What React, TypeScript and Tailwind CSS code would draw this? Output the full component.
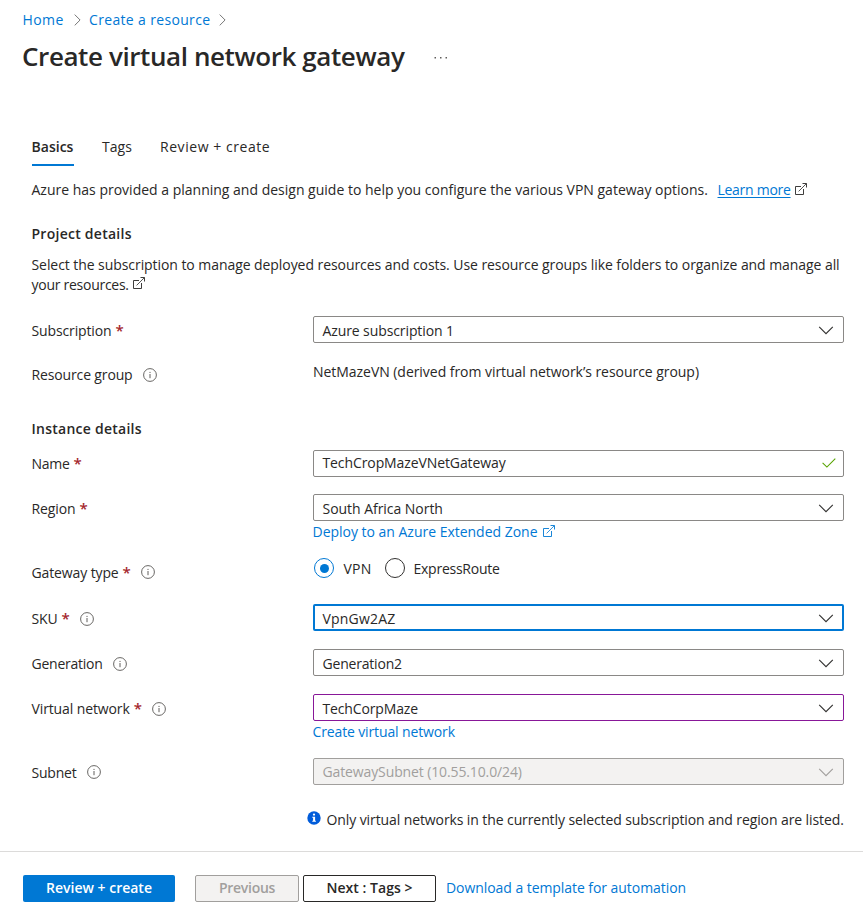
import type { ReactNode } from "react";

function ExternalLinkIcon({ className = "" }: { className?: string }) {
  return (
    <svg className={className} width="12" height="12" viewBox="0 0 12 12" fill="none" stroke="currentColor" strokeWidth="0.9">
      <path d="M6 3.5H0.5V11.5H8.5V6" />
      <path d="M3.6 8.4L11.3 0.7" strokeWidth="0.8" />
      <path d="M7.5 0.5H11.5V4.5" />
    </svg>
  );
}

function ChevronDown({ className = "text-[#323130]" }: { className?: string }) {
  return (
    <svg className={className} width="16" height="9" viewBox="0 0 16 9" fill="none" stroke="currentColor" strokeWidth="1.1">
      <path d="M1.2 0.9L8 7.7L14.8 0.9" />
    </svg>
  );
}

function BreadcrumbArrow() {
  return (
    <svg width="7" height="12" viewBox="0 0 7 12" fill="none" stroke="#777" strokeWidth="1">
      <path d="M0.7 0.6L6.1 6L0.7 11.4" />
    </svg>
  );
}

function InfoIcon() {
  return (
    <svg width="14" height="14" viewBox="0 0 14 14" fill="none" stroke="#605e5c">
      <circle cx="7" cy="7" r="6.4" strokeWidth="0.95" />
      <path d="M7 6V10.2M7 3.9V5" strokeWidth="1" />
    </svg>
  );
}

function Label({ text, tracking, required, info, iconTop = "mt-[3px]", pad = "pt-[5px]" }: {
  text: string; tracking: string; required?: boolean; info?: boolean; iconTop?: string; pad?: string;
}) {
  return (
    <div className={`flex w-[281.5px] shrink-0 ${pad}`}>
      <span className={tracking}>{text}</span>
      {required && <span className="-mt-px ml-1 w-2 text-[15px] font-semibold text-[#a4262c]">*</span>}
      {info && <span className={`ml-2.5 ${iconTop}`}><InfoIcon /></span>}
    </div>
  );
}

function Field({ text, tracking, box = "border border-[#8a8886] pt-1 pl-[8.5px] pr-[9px]", icon }: {
  text: string; tracking: string; box?: string; icon?: ReactNode;
}) {
  return (
    <div className={`flex h-[27px] w-[531px] justify-between rounded-[2px] ${box}`}>
      <span className={tracking}>{text}</span>
      {icon ?? <ChevronDown className="mt-[5px] text-[#323130]" />}
    </div>
  );
}

export default function App() {
  return (
    <div className="flex h-[923px] w-[863px] flex-col overflow-hidden bg-white font-['Open_Sans','Noto_Sans',sans-serif] text-sm leading-5 whitespace-nowrap text-[#292827]">
      <nav className="mt-2.5 ml-[22.5px] flex h-5 items-center text-[#0078d4]">
        <span className="w-[51px] tracking-[0.4px]">Home</span>
        <BreadcrumbArrow />
        <span className="ml-[8.5px] w-[130px] tracking-[0.34px]">Create a resource</span>
        <BreadcrumbArrow />
      </nav>

      <header className="mt-2 mb-px ml-[22px] flex h-9 items-center">
        <h1 className="w-[412px] text-[26px] leading-9 font-semibold tracking-[-0.41px]">Create virtual network gateway</h1>
        <svg className="mt-[3px]" width="14" height="2" viewBox="0 0 14 2" fill="#605e5c">
          <rect x="0.5" width="1.5" height="1.5" />
          <rect x="6" width="1.5" height="1.5" />
          <rect x="11.5" width="1.5" height="1.5" />
        </svg>
      </header>

      <main className="ml-[31.5px] flex flex-col">
        <div className="mt-[62px] flex h-[29px]">
          <div className="h-[29px] w-[42.5px] border-b-2 border-[#0078d4] font-semibold tracking-[0.02px]">Basics</div>
          <div className="ml-7 w-[30px] tracking-[0.06px]">Tags</div>
          <div className="ml-7 tracking-[0.55px]">Review + create</div>
        </div>

        <p className="mt-3.5 flex h-5">
          <span className="w-[686px]">Azure has provided a planning and design guide to help you configure the various VPN gateway options.</span>
          <span className="tracking-[-0.28px] text-[#0078d4] underline underline-offset-2">Learn more</span>
          <ExternalLinkIcon className="mt-[3px] ml-[4.5px]" />
        </p>

        <h2 className="mt-6 font-semibold tracking-[0.26px]">Project details</h2>
        <p className="mt-[11px] h-10">
          <span className="block tracking-[-0.066px]">Select the subscription to manage deployed resources and costs. Use resource groups like folders to organize and manage all</span>
          <span className="flex tracking-[-0.27px]">your resources.<ExternalLinkIcon className="mt-0.5 ml-1" /></span>
        </p>

        <div className="mt-[21px] flex h-[27px]">
          <Label text="Subscription" tracking="tracking-[-0.13px]" required />
          <Field text="Azure subscription 1" tracking="tracking-[-0.1px]" />
        </div>
        <div className="mt-[17px] flex h-[27px]">
          <Label text="Resource group" tracking="tracking-[-0.14px]" info />
          <span className="pt-0.5 tracking-[-0.044px]">NetMazeVN (derived from virtual network’s resource group)</span>
        </div>

        <h2 className="mt-8 font-semibold tracking-[0.25px]">Instance details</h2>
        <div className="mt-[11px] flex h-[27px]">
          <Label text="Name" tracking="tracking-[-0.28px]" required pad="pt-1" />
          <Field
            text="TechCropMazeVNetGateway"
            tracking="tracking-[-0.1px]"
            box="border border-[#8a8886] pt-[2px] pl-[8.5px] pr-[7px]"
            icon={
              <svg className="mt-[5px]" width="14" height="10" viewBox="0 0 14 10" fill="none" stroke="#57a300" strokeWidth="1.1">
                <path d="M0.6 4.9L4.9 9.1L13.3 0.7" />
              </svg>
            }
          />
        </div>
        <div className="mt-[17px] flex h-[27px]">
          <Label text="Region" tracking="tracking-[-0.1px]" required />
          <Field text="South Africa North" tracking="tracking-[-0.04px]" />
        </div>
        <div className="mt-px ml-[281px] flex h-5 text-[#0078d4]">
          <span className="tracking-[-0.016px]">Deploy to an Azure Extended Zone</span>
          <ExternalLinkIcon className="mt-[3px] ml-[5px]" />
        </div>
        <div className="mt-4 flex h-[27px]">
          <Label text="Gateway type" tracking="tracking-[-0.12px]" required info iconTop="mt-0.5" />
          <div className="flex h-5">
            <span className="ml-px flex size-5 items-center justify-center rounded-full border border-[#0078d4]">
              <span className="size-[9px] rounded-full bg-[#0078d4]" />
            </span>
            <span className="mt-px ml-[9.5px] w-[41.5px] tracking-[0.23px]">VPN</span>
            <span className="size-5 rounded-full border border-[#323130]" />
            <span className="mt-px ml-[8.5px] tracking-[-0.25px]">ExpressRoute</span>
          </div>
        </div>
        <div className="mt-[19px] flex h-[27px]">
          <Label text="SKU" tracking="tracking-[-0.15px]" required info />
          <Field text="VpnGw2AZ" tracking="tracking-[0.2px]" box="border-2 border-[#0078d4] pt-[3px] pl-[7.5px] pr-2" />
        </div>
        <div className="mt-[18px] flex h-[27px]">
          <Label text="Generation" tracking="tracking-[-0.24px]" info />
          <Field text="Generation2" tracking="tracking-[-0.2px]" />
        </div>
        <div className="mt-[18px] flex h-[27px]">
          <Label text="Virtual network" tracking="tracking-[-0.12px]" required info />
          <Field text="TechCorpMaze" tracking="tracking-[-0.15px]" box="border border-[#881798] pt-1 pl-[8.5px] pr-[9px]" />
        </div>
        <div className="mt-px ml-[281px] h-5 tracking-[-0.13px] text-[#0078d4]">Create virtual network</div>
        <div className="mt-4 flex h-[27px]">
          <Label text="Subnet" tracking="tracking-[-0.2px]" info iconTop="mt-0.5" />
          <Field
            text="GatewaySubnet (10.55.10.0/24)"
            tracking="tracking-[-0.12px]"
            box="border border-[#a19f9d] bg-[#f3f2f1] pt-[3px] pl-[8.5px] pr-[9px] text-[#a19f9d]"
            icon={<ChevronDown className="mt-1.5 text-[#a19f9d]" />}
          />
        </div>
        <div className="mt-[25px] ml-[275px] flex h-5">
          <svg className="mt-px" width="14" height="14" viewBox="0 0 14 14">
            <circle cx="7" cy="7" r="6.7" fill="#015cda" />
            <circle cx="7" cy="3.6" r="1.15" fill="#fff" />
            <path d="M5.3 5.7H8.1V9.7H8.9V10.7H5.3V9.7H6.1V6.7H5.3Z" fill="#fff" />
          </svg>
          <span className="ml-[6px] tracking-[-0.098px]">Only virtual networks in the currently selected subscription and region are listed.</span>
        </div>
      </main>

      <footer className="mt-[21px] flex h-[72px] shrink-0 border-t border-[#dcdbda] pt-[23px] pl-[23px]">
        <button className="h-[27px] w-[152px] rounded-[2px] bg-[#0078d4] pb-px leading-[26px] font-semibold text-white">Review + create</button>
        <button className="ml-5 h-[27px] w-[104px] rounded-[2px] border border-[#a19f9d] bg-[#f3f2f1] pb-0.5 leading-[23px] font-semibold tracking-[-0.28px] text-[#a19f9d]">Previous</button>
        <button className="ml-1 h-[27px] w-[133px] rounded-[2px] border border-[#292827] pb-0.5 leading-[23px] font-semibold tracking-[0.03px]">Next : Tags &gt;</button>
        <a className="ml-2.5 pt-[3px] tracking-[-0.06px] text-[#0078d4]">Download a template for automation</a>
      </footer>
    </div>
  );
}
